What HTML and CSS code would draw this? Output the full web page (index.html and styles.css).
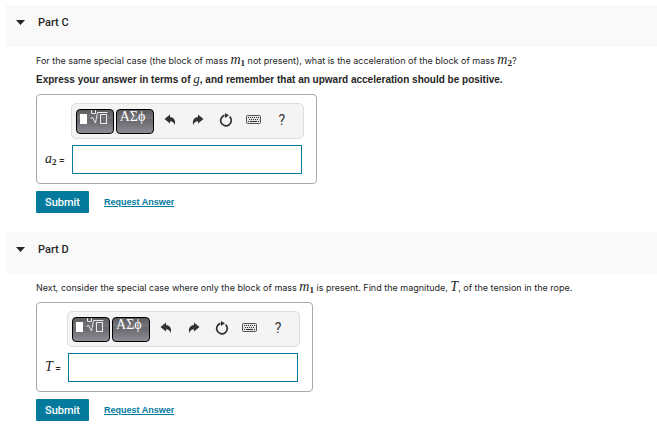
FILE: index.html
```html
<!DOCTYPE html>
<html lang="en">
<head>
    <meta charset="UTF-8">
    <meta name="viewport" content="width=device-width, initial-scale=1.0">
    <title>Part C and Part D</title>
    <link rel="stylesheet" href="styles.css">
</head>
<body>

  <!-- shared toolbar icons -->
  <svg class="icon-defs" width="0" height="0">
    <symbol id="icon-templates" viewBox="0 0 36 23">
      <rect x="3" y="4" width="7" height="10" fill="#fff"/>
      <path d="M13.500 8.500l2-1 3 5.500L20.500 2.500h10M14.500 0v3.500h4V0" fill="none" stroke="#e8e8e8"/>
      <rect x="23.500" y="4.500" width="6" height="9" fill="none" stroke="#e8e8e8"/>
    </symbol>
    <symbol id="icon-undo" viewBox="0 0 12 12">
      <path d="M.5 5L6 .5V3c4 .2 6 3.500 4.800 8C10 8.500 8.500 7.300 6 7.200V9.500z" fill="#333"/>
    </symbol>
    <symbol id="icon-redo" viewBox="0 0 12 12">
      <path d="M11.500 5L6 .5V3C2 3.200 0 6.500 1.200 11 2 8.500 3.500 7.300 6 7.200V9.500z" fill="#333"/>
    </symbol>
    <symbol id="icon-reset" viewBox="0 0 14 14">
      <path d="M10.600 3.600A5.300 5.300 0 1 1 5.500 2.400" fill="none" stroke="#333" stroke-width="1.700"/>
      <path d="M6 0L10 2.300 6 5z" fill="#333"/>
    </symbol>
    <symbol id="icon-keyboard" viewBox="0 0 16 10">
      <rect x=".5" y=".5" width="14" height="8" rx="1" fill="#e4e4e4" stroke="#555"/>
      <path d="M2 2.500h11M3 4.500h10" stroke="#333" stroke-dasharray="1 1"/>
      <path d="M2 6.500h1M4 6.500h7M12 6.500h1" stroke="#333"/>
    </symbol>
  </svg>

  <section class="part">
    <div class="part-header">
      <button class="part-toggle" aria-label="Collapse Part C"></button>
      <h2>Part C</h2>
    </div>
    <div class="part-body">
      <p>For the same special case (the block of mass <i class="math">m<sub>1</sub></i> not present), what is the acceleration of the block of mass <i class="math">m<sub>2</sub></i>?</p>
      <p class="instruction">Express your answer in terms of <i class="math">g</i>, and remember that an upward acceleration should be positive.</p>

      <div class="answer-box">
        <div class="toolbar">
          <button class="tool-dark" aria-label="Templates"><svg width="36" height="23"><use href="#icon-templates"/></svg></button>
          <button class="tool-dark tool-greek">ΑΣϕ</button>
          <button class="tool" aria-label="Undo"><svg width="12" height="12"><use href="#icon-undo"/></svg></button>
          <button class="tool" aria-label="Redo"><svg width="12" height="12"><use href="#icon-redo"/></svg></button>
          <button class="tool" aria-label="Reset"><svg width="14" height="14"><use href="#icon-reset"/></svg></button>
          <button class="tool" aria-label="Keyboard"><svg width="16" height="10"><use href="#icon-keyboard"/></svg></button>
          <button class="tool">?</button>
        </div>
        <label for="answer-c"><i class="math">a<sub>2</sub></i> =</label>
        <input type="text" id="answer-c">
      </div>

      <div class="actions">
        <button class="submit">Submit</button>
        <a href="#">Request Answer</a>
      </div>
    </div>
  </section>

  <section class="part">
    <div class="part-header">
      <button class="part-toggle" aria-label="Collapse Part D"></button>
      <h2>Part D</h2>
    </div>
    <div class="part-body">
      <p>Next, consider the special case where only the block of mass <i class="math">m<sub>1</sub></i> is present. Find the magnitude, <i class="math">T</i>, of the tension in the rope.</p>

      <div class="answer-box">
        <div class="toolbar">
          <button class="tool-dark" aria-label="Templates"><svg width="36" height="23"><use href="#icon-templates"/></svg></button>
          <button class="tool-dark tool-greek">ΑΣϕ</button>
          <button class="tool" aria-label="Undo"><svg width="12" height="12"><use href="#icon-undo"/></svg></button>
          <button class="tool" aria-label="Redo"><svg width="12" height="12"><use href="#icon-redo"/></svg></button>
          <button class="tool" aria-label="Reset"><svg width="14" height="14"><use href="#icon-reset"/></svg></button>
          <button class="tool" aria-label="Keyboard"><svg width="16" height="10"><use href="#icon-keyboard"/></svg></button>
          <button class="tool">?</button>
        </div>
        <label for="answer-d"><i class="math">T</i> =</label>
        <input type="text" id="answer-d">
      </div>

      <div class="actions">
        <button class="submit">Submit</button>
        <a href="#">Request Answer</a>
      </div>
    </div>
  </section>

</body>
</html>
```
FILE: styles.css
```css
body {
    margin: 0px;
    padding: 5px 0px 0px 6px;
    font-family: Inter, Arial, sans-serif;
    font-size: 9px;
    color: #252525;
    background-color: #ffffff;
}

button {
    font-family: Roboto, sans-serif;
    padding: 0px;
    border: 0px;
    cursor: pointer;
}

.icon-defs {
    position: absolute;
}

.part {
    margin-bottom: 19px;
}

.part-header {
    display: flex;
    align-items: center;
    gap: 13px;
    height: 35px;
    padding: 0px 10px 7px;
    background-color: #f9f9f9;
}

.part-toggle {
    width: 9px;
    height: 5px;
    background-color: #252525;
    clip-path: polygon(0 0, 100% 0, 50% 100%);
}

h2 {
    font-family: Roboto, sans-serif;
    font-size: 11px;
    font-weight: 500;
    margin: 0px;
}

.part-body {
    padding: 4px 10px 0px 30px;
}

p {
    margin: 0px;
    line-height: 19px;
}

.instruction {
    font-family: "Liberation Sans", Arial, sans-serif;
    font-size: 10px;
    font-weight: bold;
}

.math {
    font-family: "Liberation Serif", serif;
    font-size: 14px;
    font-weight: normal;
    line-height: 10px;
}

.instruction .math {
    font-size: 13px;
}

sub {
    font-size: 9px;
    font-style: normal;
    font-weight: bold;
    line-height: 1px;
    vertical-align: -2px;
}

.answer-box {
    display: inline-grid;
    grid-template-columns: auto auto;
    align-items: center;
    row-gap: 6px;
    margin-top: 5px;
    padding: 8px 12px 9px 8px;
    border: 1px solid #a9a9a9;
    border-radius: 4px;
}

.toolbar {
    grid-column: 2;
    display: flex;
    align-items: center;
    box-sizing: border-box;
    width: 233px;
    height: 36px;
    padding: 0px 4px;
    background-color: #f4f4f4;
    border: 1px solid #dddddd;
    border-radius: 5px;
}

.tool-dark {
    display: flex;
    box-sizing: border-box;
    width: 38px;
    height: 25px;
    margin-right: 2px;
    border: 1px solid #000000;
    border-radius: 4px;
    background: linear-gradient(#5c5c60, #78787c 40%, #66666b 41%, #8c8c94);
    color: #ffffff;
    font-family: "Liberation Serif", serif;
    font-size: 14px;
    line-height: 14px;
}

.tool-greek {
    padding-left: 3px;
}

.tool {
    display: flex;
    align-items: center;
    justify-content: center;
    width: 28px;
    height: 28px;
    padding-bottom: 2px;
    background: none;
    color: #333333;
    font-size: 14px;
}

label {
    padding-right: 6px;
    font-weight: bold;
}

input {
    box-sizing: border-box;
    width: 230px;
    height: 29px;
    margin: 0px 0px 0px 1px;
    padding: 2px 6px;
    border: 1px solid #047a9c;
    font-size: 12px;
}

.actions {
    display: flex;
    align-items: center;
    gap: 15px;
    margin-top: 7px;
}

.submit {
    width: 53px;
    height: 22px;
    border-radius: 1px;
    background-color: #047a9c;
    color: #ffffff;
    font-size: 11px;
    font-weight: 500;
}

a {
    color: #047a9c;
    font-family: "Liberation Sans", Arial, sans-serif;
    font-size: 9px;
    font-weight: bold;
}
```
